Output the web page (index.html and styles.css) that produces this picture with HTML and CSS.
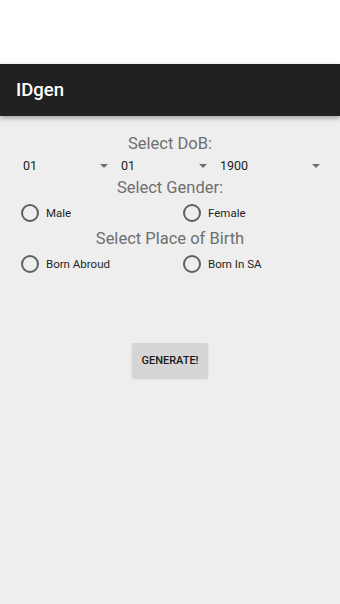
FILE: index.html
```html
<!DOCTYPE html>
<html>
<head>
<meta charset="utf-8">
<link rel="stylesheet" href="styles.css">
</head>
<body>
<div class="status"></div>
<header class="toolbar"><span class="title">IDgen</span></header>
<main class="content">
  <div class="heading">Select DoB:</div>
  <div class="spinners">
    <div class="spinner s1"><span>01</span><i class="arrow"></i></div>
    <div class="spinner s2"><span>01</span><i class="arrow"></i></div>
    <div class="spinner s3"><span>1900</span><i class="arrow"></i></div>
  </div>
  <div class="heading">Select Gender:</div>
  <div class="radios">
    <label class="radio"><span class="circle"></span><span class="lbl">Male</span></label>
    <label class="radio"><span class="circle"></span><span class="lbl">Female</span></label>
  </div>
  <div class="heading">Select Place of Birth</div>
  <div class="radios">
    <label class="radio"><span class="circle"></span><span class="lbl">Born Abroud</span></label>
    <label class="radio"><span class="circle"></span><span class="lbl">Born In SA</span></label>
  </div>
  <div class="btnrow"><button class="btn">GENERATE!</button></div>
</main>
</body>
</html>
```
FILE: styles.css
```css
html, body {
  margin: 0;
  padding: 0;
  height: 100%;
}
body {
  background: #eeeeee;
  font-family: Roboto, "Noto Sans", sans-serif;
  display: flex;
  flex-direction: column;
}
.status {
  height: 64px;
  background: #ffffff;
}
.toolbar {
  height: 52px;
  background: #212121;
  display: flex;
  align-items: center;
  padding-left: 16px;
  box-shadow: 0 2px 5px rgba(0,0,0,0.35);
  position: relative;
  z-index: 1;
}
.title {
  color: #ffffff;
  font-size: 18.5px;
  font-weight: 500;
}
.content {
  flex: 1;
  padding-top: 18px;
}
.heading {
  text-align: center;
  font-size: 16.5px;
  line-height: 19px;
  color: #6f6f6f;
}
.spinners {
  display: flex;
  padding-left: 15px;
  height: 25px;
}
.spinner {
  display: flex;
  align-items: center;
  justify-content: space-between;
  padding-left: 8px;
  box-sizing: border-box;
  font-size: 12.5px;
  color: #222222;
}
.s1 { width: 98px; padding-right: 5px; }
.s2 { width: 99px; padding-right: 5px; }
.s3 { width: 113px; padding-right: 5px; }
.arrow {
  width: 0;
  height: 0;
  border-left: 4px solid transparent;
  border-right: 4px solid transparent;
  border-top: 4px solid #6e6e6e;
}
.radios {
  display: grid;
  grid-template-columns: 162px 1fr;
  padding-left: 21px;
  height: 32px;
  align-items: center;
}
.radio {
  display: flex;
  align-items: center;
}
.circle {
  width: 14px;
  height: 14px;
  border: 2px solid #5f5f5f;
  border-radius: 50%;
}
.lbl {
  margin-left: 7px;
  font-size: 11.5px;
  color: #1e1e1e;
}
.btnrow {
  display: flex;
  justify-content: center;
  margin-top: 63px;
}
.btn {
  width: 76px;
  height: 35px;
  border: none;
  border-radius: 2px;
  background: #d6d6d6;
  box-shadow: 0 1px 2px rgba(0,0,0,0.15);
  font-family: Roboto, "Noto Sans", sans-serif;
  font-weight: 500;
  font-size: 11px;
  color: #1a1a1a;
  padding: 0;
}
```
